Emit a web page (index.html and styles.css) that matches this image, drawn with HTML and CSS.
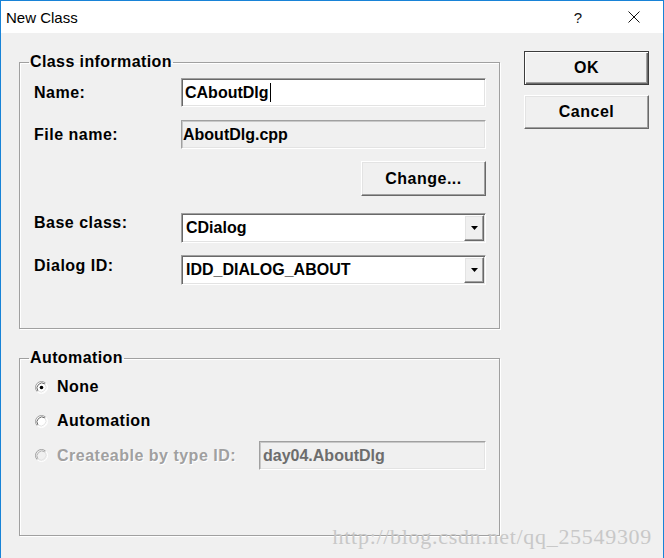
FILE: index.html
```html
<!DOCTYPE html>
<html>
<head>
<meta charset="utf-8">
<title>New Class</title>
<link rel="stylesheet" href="styles.css">
</head>
<body>
<div class="window">
  <div class="titlebar">
    <span class="title">New Class</span>
    <span class="help">?</span>
    <span class="close"><svg width="12" height="12" viewBox="0 0 12 12"><path d="M0.5 0.5 L11.5 11.5 M11.5 0.5 L0.5 11.5" stroke="#111" stroke-width="1" fill="none"/></svg></span>
  </div>
  <div class="client">
    <div class="groups">
      <fieldset class="group group-class">
        <legend>Class information</legend>
        <div class="row row-name">
          <span class="lbl">Name:</span>
          <div class="edit">CAboutDlg<span class="caret"></span></div>
        </div>
        <div class="row row-file">
          <span class="lbl">File name:</span>
          <div class="edit readonly">AboutDlg.cpp</div>
        </div>
        <div class="row row-change">
          <div class="btn btn-change">Change...</div>
        </div>
        <div class="row row-combo row-base">
          <span class="lbl">Base class:</span>
          <div class="combo"><span class="combo-text">CDialog</span><span class="combo-btn"><svg width="7" height="4" viewBox="0 0 7 4"><polygon points="0,0 7,0 3.5,4" fill="#000"/></svg></span></div>
        </div>
        <div class="row row-combo row-dialog">
          <span class="lbl">Dialog ID:</span>
          <div class="combo"><span class="combo-text">IDD_DIALOG_ABOUT</span><span class="combo-btn"><svg width="7" height="4" viewBox="0 0 7 4"><polygon points="0,0 7,0 3.5,4" fill="#000"/></svg></span></div>
        </div>
      </fieldset>
      <fieldset class="group group-auto">
        <legend>Automation</legend>
        <div class="radio-row row-none">
          <svg class="radio" width="13" height="13" viewBox="0 0 13 13"><circle cx="6.5" cy="6.5" r="5.5" fill="#fff"/><path d="M2.25 10.75 A6 6 0 0 1 10.75 2.25" stroke="#a0a0a0" fill="none"/><path d="M10.75 2.25 A6 6 0 0 1 2.25 10.75" stroke="#fff" fill="none"/><path d="M3 10 A5 5 0 0 1 10 3" stroke="#696969" fill="none"/><path d="M10 3 A5 5 0 0 1 3 10" stroke="#e3e3e3" fill="none"/><circle cx="6.5" cy="6.5" r="1.8" fill="#000"/></svg>
          <span class="rlbl">None</span>
        </div>
        <div class="radio-row row-automation">
          <svg class="radio" width="13" height="13" viewBox="0 0 13 13"><circle cx="6.5" cy="6.5" r="5.5" fill="#fff"/><path d="M2.25 10.75 A6 6 0 0 1 10.75 2.25" stroke="#a0a0a0" fill="none"/><path d="M10.75 2.25 A6 6 0 0 1 2.25 10.75" stroke="#fff" fill="none"/><path d="M3 10 A5 5 0 0 1 10 3" stroke="#696969" fill="none"/><path d="M10 3 A5 5 0 0 1 3 10" stroke="#e3e3e3" fill="none"/></svg>
          <span class="rlbl">Automation</span>
        </div>
        <div class="radio-row row-create">
          <svg class="radio" width="13" height="13" viewBox="0 0 13 13"><circle cx="6.5" cy="6.5" r="5.5" fill="#f0f0f0"/><path d="M2.25 10.75 A6 6 0 0 1 10.75 2.25" stroke="#a0a0a0" fill="none"/><path d="M10.75 2.25 A6 6 0 0 1 2.25 10.75" stroke="#fff" fill="none"/><path d="M3 10 A5 5 0 0 1 10 3" stroke="#b4b4b4" fill="none"/><path d="M10 3 A5 5 0 0 1 3 10" stroke="#e3e3e3" fill="none"/></svg>
          <span class="rlbl disabled">Createable by type ID:</span>
          <div class="edit readonly typeid">day04.AboutDlg</div>
        </div>
      </fieldset>
    </div>
    <div class="buttons">
      <div class="btn btn-default">OK</div>
      <div class="btn">Cancel</div>
    </div>
  </div>
  <div class="watermark">http://blog.csdn.net/qq_25549309</div>
</div>
</body>
</html>
```
FILE: styles.css
```css
html, body {
  margin: 0;
  padding: 0;
  background: #f0f0f0;
}

.window {
  position: relative;
  box-sizing: border-box;
  width: 664px;
  height: 558px;
  border: 1px solid #1883d7;
  border-bottom: none;
  background: #f0f0f0;
  overflow: hidden;
  font-family: "Liberation Sans", Arial, sans-serif;
  color: #000;
}

.titlebar {
  height: 32px;
  background: #fff;
  display: flex;
  align-items: center;
}

.title {
  padding-left: 5px;
  font-size: 15px;
  color: #000;
}

.help {
  margin-left: auto;
  font-size: 15px;
  color: #111;
}

.close {
  display: flex;
  margin-left: 46px;
  margin-right: 23px;
}

.client {
  display: flex;
  align-items: flex-start;
  padding: 20px 0 0 18px;
}

.groups {
  width: 481px;
  display: flex;
  flex-direction: column;
}

.group {
  margin: 0;
  padding: 0;
  border: 1px solid #a0a0a0;
  box-shadow: 1px 1px 0 #fff, inset 1px 1px 0 #fff;
  min-width: 0;
}

.group legend {
  margin-left: 9px;
  padding: 0 1px;
  font-weight: bold;
  font-size: 16px;
  line-height: 18px;
  letter-spacing: 0.4px;
}

.group-class {
  padding-bottom: 43px;
}

.group-auto {
  margin-top: 20px;
  padding-bottom: 65px;
}

.row {
  display: flex;
  align-items: center;
  padding-left: 14px;
}

.lbl {
  width: 147px;
  flex: none;
  font-weight: bold;
  font-size: 16px;
  line-height: 18px;
  letter-spacing: 0.5px;
}

.row-name { margin-top: 7px; height: 29px; }
.row-file { margin-top: 13px; height: 29px; }
.row-change { margin-top: 12px; justify-content: flex-end; padding-right: 13px; }
.row-base { margin-top: 17px; }
.row-dialog { margin-top: 12px; }

.row-combo { align-items: flex-start; height: 30px; }
.row-base .lbl { padding-top: 1px; }
.row-dialog .lbl { padding-top: 2px; }

.edit {
  box-sizing: border-box;
  width: 305px;
  height: 29px;
  background: #fff;
  border: 1px solid;
  border-color: #a0a0a0 #fff #fff #a0a0a0;
  box-shadow: inset 1px 1px 0 #696969, inset -1px -1px 0 #e3e3e3;
  padding-left: 3px;
  display: flex;
  align-items: center;
  font-weight: bold;
  font-size: 16px;
  line-height: 18px;
}

.edit.readonly {
  background: #f0f0f0;
  padding-left: 1px;
  box-shadow: inset 1px 1px 0 #c8c8c8, inset -1px -1px 0 #e3e3e3;
}

.caret {
  width: 1px;
  height: 19px;
  background: #000;
  margin-left: 1px;
}

.combo {
  box-sizing: border-box;
  width: 305px;
  height: 30px;
  background: #fff;
  border: 1px solid;
  border-color: #a0a0a0 #fff #fff #a0a0a0;
  box-shadow: inset 1px 1px 0 #696969, inset -1px -1px 0 #e3e3e3;
  display: flex;
}

.combo-text {
  flex: 1;
  padding-left: 4px;
  display: flex;
  align-items: center;
  font-weight: bold;
  font-size: 16px;
  line-height: 18px;
}

.combo-btn {
  box-sizing: border-box;
  width: 20px;
  margin: 1px 1px 1px 0;
  background: #f0f0f0;
  border: 1px solid;
  border-color: #fff #696969 #696969 #fff;
  box-shadow: inset -1px -1px 0 #a0a0a0, inset 1px 1px 0 #e3e3e3;
  display: flex;
  align-items: center;
  justify-content: center;
}

.btn {
  box-sizing: border-box;
  width: 125px;
  height: 34px;
  background: #f0f0f0;
  border: 1px solid;
  border-color: #fff #696969 #696969 #fff;
  box-shadow: inset -1px -1px 0 #a0a0a0, inset 1px 1px 0 #e3e3e3;
  display: flex;
  align-items: center;
  justify-content: center;
  font-weight: bold;
  font-size: 16px;
  line-height: 18px;
  letter-spacing: 0.5px;
}

.btn-change {
  height: 35px;
}

.btn-default {
  border-color: #3c3c3c;
  box-shadow: inset 1px 1px 0 #fff, inset -1px -1px 0 #696969, inset -2px -2px 0 #a0a0a0;
}

.buttons {
  margin-left: 24px;
  margin-top: -2px;
  display: flex;
  flex-direction: column;
  gap: 10px;
}

.radio-row {
  display: flex;
  align-items: center;
  padding-left: 15px;
}

.radio {
  flex: none;
  display: block;
}

.rlbl {
  margin-left: 9px;
  font-weight: bold;
  font-size: 16px;
  line-height: 20px;
  letter-spacing: 0.5px;
}

.row-none { margin-top: 10px; height: 20px; }
.row-automation { margin-top: 14px; height: 20px; }
.row-create { margin-top: 10px; height: 29px; }

.rlbl.disabled {
  width: 202px;
  flex: none;
  color: #a0a0a0;
  text-shadow: 1px 1px 0 #fff;
}

.edit.typeid {
  width: 227px;
  padding-left: 3px;
  color: #6d6d6d;
}

.watermark {
  position: absolute;
  right: 11px;
  top: 525px;
  font-family: "Liberation Serif", "Times New Roman", serif;
  font-size: 22px;
  line-height: 22px;
  letter-spacing: 0.7px;
  color: #c8c8c8;
  white-space: nowrap;
}
```
